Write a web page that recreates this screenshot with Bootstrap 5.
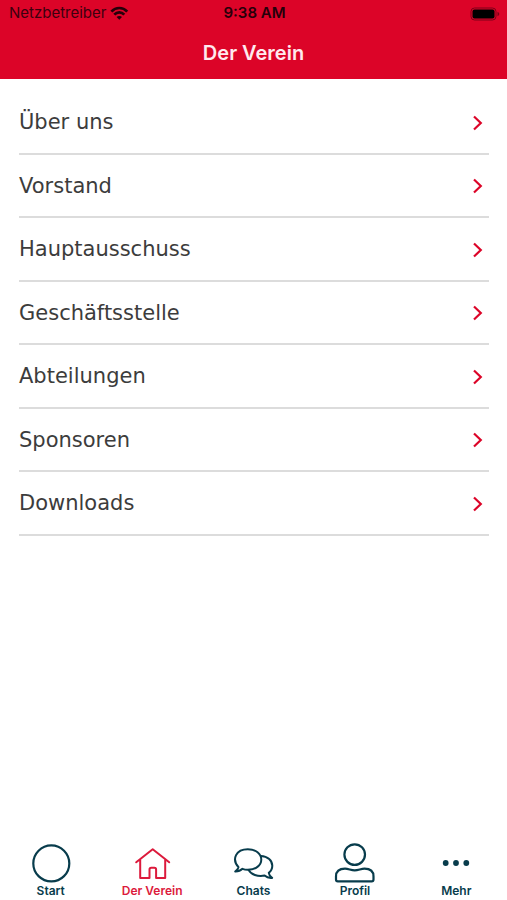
<!DOCTYPE html>
<html lang="de">
<head>
<meta charset="utf-8">
<meta name="viewport" content="width=device-width, initial-scale=1">
<title>Der Verein</title>
<link href="https://cdn.jsdelivr.net/npm/bootstrap@5.3.0/dist/css/bootstrap.min.css" rel="stylesheet">
<style>
  :root { --club-red: #dc0428; --club-navy: #083c4c; }
  body { font-family: Inter, "Liberation Sans", sans-serif; background: #fff; }
  .app-head { background: var(--club-red); height: 79px; }
  .status { height: 27px; padding: 0 7px 0 9px; font-size: 15px; color: #26000a; display: grid; grid-template-columns: 1fr auto 1fr; }
  .carrier { font-size: 15px; color: #3c000e; }
  .clock { font-weight: 600; }
  .app-title { font-size: 20px; line-height: 52px; font-weight: 600; color: #ffe9ee; }
  .menu { padding: 12px 18px 0 19px; }
  .menu .list-group-item { font-family: "DejaVu Sans", Verdana, sans-serif; font-size: 21px; line-height: 1.5; color: #3c3c3c; padding: 16px 5px 14px 0; border: 0; border-bottom: 2px solid #dcdcdc; background: transparent; }
  .menu .list-group-item:last-child { border-bottom-width: 2px; }
  .chevron { color: var(--club-red); }
  .tabs { height: 60px; }
  .tabs a { color: var(--club-navy); font-size: 12px; line-height: 14px; font-weight: 600; }
  .tabs a.active { color: #dc1a3c; }
</style>
</head>
<body class="d-flex flex-column min-vh-100">
<header class="app-head">
  <div class="status align-items-center">
    <div class="d-flex align-items-center gap-1">
      <span class="carrier">Netzbetreiber</span>
      <svg width="20" height="16" viewBox="0 0 20 16" fill="none" stroke="currentColor" stroke-width="2.7" aria-hidden="true">
        <path d="M1.4 5.6C5.8 .8 12.8 .8 17.2 5.6M4.3 8.6C7.1 5.6 11.5 5.6 14.3 8.6"/>
        <path d="M6.6 11.1C8.1 9.6 10.5 9.6 12 11.1L9.3 13.8Z" fill="currentColor" stroke="none"/>
      </svg>
    </div>
    <span class="clock">9:38 AM</span>
    <svg class="ms-auto" width="30" height="14" viewBox="0 0 30 14" aria-hidden="true">
      <rect x="1" y="1" width="25" height="12" rx="3.5" fill="none" stroke="#7c0018" stroke-width="1"/>
      <rect x="2.5" y="2.5" width="22" height="9" rx="2" fill="#000"/>
      <path d="M27.5 4.8V9.2Q29.3 8.5 29.3 7T27.5 4.8Z" fill="#7c0018"/>
    </svg>
  </div>
  <h1 class="app-title text-center m-0">Der Verein</h1>
</header>

<svg class="d-none" aria-hidden="true">
  <symbol id="chevron" viewBox="0 0 12 18"><path d="M2 2.5L8.8 9L2 15.5" fill="none" stroke="currentColor" stroke-width="2.2"/></symbol>
</svg>

<main class="menu flex-grow-1">
  <div class="list-group list-group-flush">
    <a href="#" class="list-group-item d-flex justify-content-between align-items-center">Über uns<svg class="chevron" width="12" height="18"><use href="#chevron"/></svg></a>
    <a href="#" class="list-group-item d-flex justify-content-between align-items-center">Vorstand<svg class="chevron" width="12" height="18"><use href="#chevron"/></svg></a>
    <a href="#" class="list-group-item d-flex justify-content-between align-items-center">Hauptausschuss<svg class="chevron" width="12" height="18"><use href="#chevron"/></svg></a>
    <a href="#" class="list-group-item d-flex justify-content-between align-items-center">Geschäftsstelle<svg class="chevron" width="12" height="18"><use href="#chevron"/></svg></a>
    <a href="#" class="list-group-item d-flex justify-content-between align-items-center">Abteilungen<svg class="chevron" width="12" height="18"><use href="#chevron"/></svg></a>
    <a href="#" class="list-group-item d-flex justify-content-between align-items-center">Sponsoren<svg class="chevron" width="12" height="18"><use href="#chevron"/></svg></a>
    <a href="#" class="list-group-item d-flex justify-content-between align-items-center">Downloads<svg class="chevron" width="12" height="18"><use href="#chevron"/></svg></a>
  </div>
</main>

<nav class="tabs nav nav-fill flex-nowrap sticky-bottom bg-white">
  <a href="#" class="nav-item w-100 text-decoration-none d-flex flex-column align-items-center">
    <svg width="42" height="44" viewBox="0 0 42 44" fill="none" stroke="currentColor" stroke-width="2.2" aria-hidden="true"><circle cx="21.3" cy="23.4" r="18"/></svg>Start</a>
  <a href="#" class="nav-item w-100 text-decoration-none d-flex flex-column align-items-center active" aria-current="page">
    <svg width="42" height="44" viewBox="0 0 42 44" fill="none" stroke="currentColor" stroke-width="2" stroke-linejoin="round" stroke-linecap="round" aria-hidden="true"><path d="M5.2 22.3L21.7 9.2L38.2 22.3M9.2 19.5V38H18.5V29.5Q18.5 27.8 20.2 27.8H23.4Q25.1 27.8 25.1 29.5V38H34.2V19.5"/></svg>Der Verein</a>
  <a href="#" class="nav-item w-100 text-decoration-none d-flex flex-column align-items-center">
    <svg width="42" height="44" viewBox="0 0 42 44" fill="none" stroke="currentColor" stroke-width="2" stroke-linejoin="round" aria-hidden="true"><path d="M5.5 27.2C-1.8 19 3.2 9.2 14.8 9.2C22.8 9.2 28.3 13.8 28.3 19.5C28.3 25.5 22.5 29.8 14.8 29.8C12.8 29.8 11.1 29.5 9.5 28.8C7.8 30.5 5.2 31.6 2.2 31.5C4.4 29.9 5.3 28.9 5.5 27.2Z"/><path d="M27.8 16C34.8 16.2 39.3 20.6 39.3 25.8C39.3 28.8 38 31.1 35.8 32.8C36.1 35 37.3 36.7 39.1 37.9C36.3 38.2 33.5 37.3 31.6 35.6C24.8 37 17.8 34.5 15.6 29.8"/></svg>Chats</a>
  <a href="#" class="nav-item w-100 text-decoration-none d-flex flex-column align-items-center">
    <svg width="42" height="44" viewBox="0 0 42 44" fill="none" stroke="currentColor" stroke-width="2.2" stroke-linejoin="round" aria-hidden="true"><circle cx="20.7" cy="14.6" r="10.3"/><path d="M3.8 41.4Q2 41.4 2 39.6V36.5Q2 28.7 11 28.7C14.5 28.7 17 30.4 20.7 30.4S27 28.7 30.5 28.7Q39.5 28.7 39.5 36.5V39.6Q39.5 41.4 37.7 41.4Z"/></svg>Profil</a>
  <a href="#" class="nav-item w-100 text-decoration-none d-flex flex-column align-items-center">
    <svg width="42" height="44" viewBox="0 0 42 44" fill="currentColor" aria-hidden="true"><circle cx="10.7" cy="23" r="2.9"/><circle cx="21" cy="23" r="2.9"/><circle cx="31.3" cy="23" r="2.9"/></svg>Mehr</a>
</nav>
<script src="https://cdn.jsdelivr.net/npm/bootstrap@5.3.0/dist/js/bootstrap.bundle.min.js"></script>
</body>
</html>
